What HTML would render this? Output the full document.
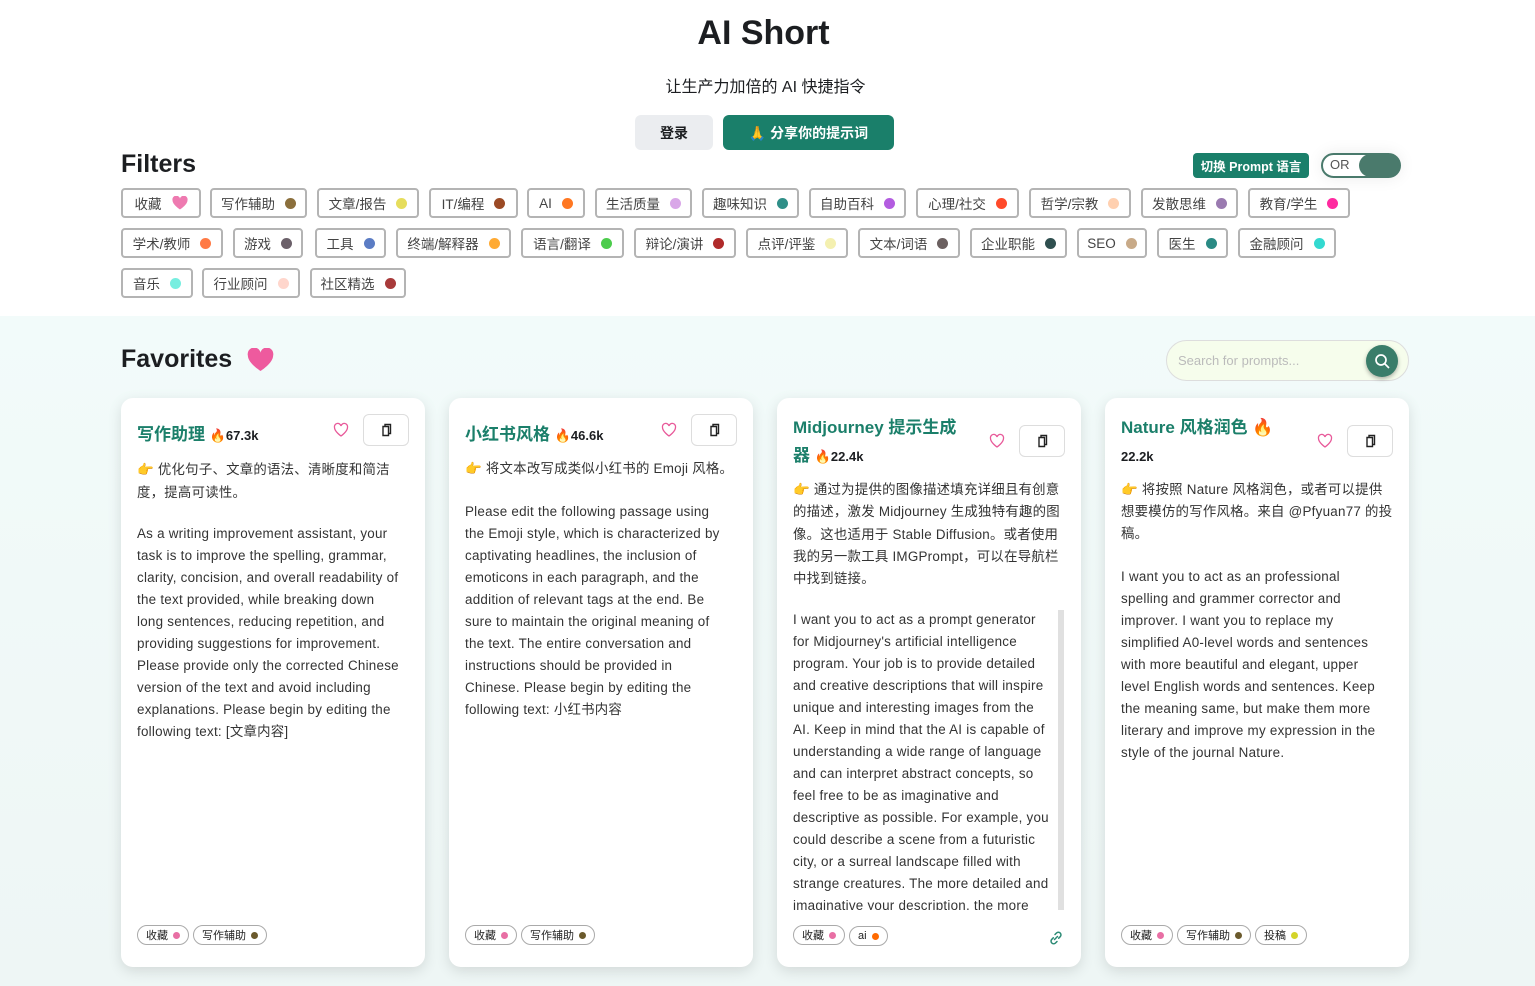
<!DOCTYPE html>
<html><head><meta charset="utf-8"><style>
*{box-sizing:border-box;margin:0;padding:0}
body{width:1535px;height:986px;overflow:hidden;background:#fff;font-family:"Liberation Sans","Noto Sans CJK SC",sans-serif;color:#1c1e21;position:relative}
.abs{position:absolute}
h1{position:absolute;top:14px;left:-4px;width:1535px;text-align:center;font-size:34px;font-weight:bold;color:#1c1e21}
.sub{top:73px;left:-2px;width:1535px;text-align:center;font-size:16px}
.btn{height:35px;border-radius:6px;font-size:14px;font-weight:bold;display:flex;align-items:center;justify-content:center}
.tag{position:absolute;height:30px;border:2px solid #b4b4b4;border-radius:4px;font-size:13.5px;color:#444;display:flex;align-items:center;justify-content:center;gap:10px;white-space:nowrap}
.dot{width:11px;height:11px;border-radius:50%;display:inline-block}
.sec{position:absolute;top:316px;left:0;width:1535px;height:670px;background:linear-gradient(180deg,#f2fbfa,#eef6f5)}
.card{position:absolute;top:398px;width:304px;height:569px;background:#fff;border-radius:12px;box-shadow:0 4px 14px rgba(0,0,0,.12);overflow:hidden}
.ttl{position:absolute;left:16px;font-size:17px;font-weight:bold;color:#1b7f6a;white-space:nowrap}
.cnt{font-size:13px;color:#1c1e21;font-weight:bold}
.heart{position:absolute;width:16px;height:16px}
.copy{position:absolute;width:46px;height:32px;border:1px solid #ddd;border-radius:6px;display:flex;align-items:center;justify-content:center}
.txt{position:absolute;left:16px;font-size:13.4px;line-height:22px;white-space:nowrap;color:#333;letter-spacing:.25px}
.pill{display:inline-flex;align-items:center;gap:5px;height:20px;padding:0 8px;border:1.5px solid #aaa;border-radius:10px;font-size:11px;margin-right:4px;color:#222}
.pill .dot{width:7px;height:7px}
.tags{position:absolute;left:16px;top:527px}
</style></head><body>
<svg width="0" height="0" style="position:absolute"><defs><g id="cp"><path d="M5 4.5h5.5v9H5z" fill="none" stroke="#222" stroke-width="1.4"/><path d="M7 4.5V2.5h5.5v9h-2" fill="none" stroke="#222" stroke-width="1.4"/></g></defs></svg>
<h1>AI Short</h1>
<div class="abs sub">让生产力加倍的 AI 快捷指令</div>
<div class="abs btn" style="left:635px;top:115px;width:78px;background:#ebedf0">登录</div>
<div class="abs btn" style="left:723px;top:115px;width:171px;background:#1a7f6a;color:#fff">🙏 分享你的提示词</div>
<div class="abs" style="left:121px;top:150px;font-size:25px;font-weight:bold">Filters</div>
<div class="abs" style="left:1193px;top:153px;width:116px;height:25px;background:#1a7f6a;border-radius:4px;color:#fff;font-size:12.5px;font-weight:bold;display:flex;align-items:center;justify-content:center">切换 Prompt 语言</div>
<div class="abs" style="left:1321px;top:153px;width:80px;height:25px;border:2px solid #4a7a6c;border-radius:13px;box-shadow:0 0 16px rgba(0,0,0,.08)"><span style="position:absolute;left:7px;top:2px;font-size:13px;color:#555">OR</span><div style="position:absolute;right:-1px;top:-1px;width:41px;height:23px;border-radius:12px;background:#4a7a6c"></div></div>

<div class="tag" style="left:121px;top:188px;width:80px">收藏 <svg width="16" height="14" viewBox="0 0 16 14"><path d="M8 13.5S.5 8.8.5 4.3A3.8 3.8 0 0 1 8 2.6a3.8 3.8 0 0 1 7.5 1.7C15.5 8.8 8 13.5 8 13.5z" fill="#ee7ab0"/></svg></div>
<div class="tag" style="left:210px;top:188px;width:97px">写作辅助 <span class="dot" style="background:#8b6f3c"></span></div>
<div class="tag" style="left:317px;top:188px;width:102px">文章/报告 <span class="dot" style="background:#e6dd5c"></span></div>
<div class="tag" style="left:429px;top:188px;width:89px">IT/编程 <span class="dot" style="background:#9b4a25"></span></div>
<div class="tag" style="left:527px;top:188px;width:58px">AI <span class="dot" style="background:#ff7722"></span></div>
<div class="tag" style="left:595px;top:188px;width:97px">生活质量 <span class="dot" style="background:#d9a7e8"></span></div>
<div class="tag" style="left:702px;top:188px;width:97px">趣味知识 <span class="dot" style="background:#2f8f88"></span></div>
<div class="tag" style="left:809px;top:188px;width:97px">自助百科 <span class="dot" style="background:#b35ce0"></span></div>
<div class="tag" style="left:916px;top:188px;width:103px">心理/社交 <span class="dot" style="background:#ff4a2a"></span></div>
<div class="tag" style="left:1029px;top:188px;width:102px">哲学/宗教 <span class="dot" style="background:#ffd0b0"></span></div>
<div class="tag" style="left:1141px;top:188px;width:97px">发散思维 <span class="dot" style="background:#9a7ab0"></span></div>
<div class="tag" style="left:1248px;top:188px;width:102px">教育/学生 <span class="dot" style="background:#ff2aa0"></span></div>

<div class="tag" style="left:121px;top:228px;width:102px">学术/教师 <span class="dot" style="background:#ff7a45"></span></div>
<div class="tag" style="left:233px;top:228px;width:70px">游戏 <span class="dot" style="background:#6b6069"></span></div>
<div class="tag" style="left:315px;top:228px;width:71px">工具 <span class="dot" style="background:#5b7cc4"></span></div>
<div class="tag" style="left:396px;top:228px;width:115px">终端/解释器 <span class="dot" style="background:#ffaa33"></span></div>
<div class="tag" style="left:521px;top:228px;width:103px">语言/翻译 <span class="dot" style="background:#4ccc4c"></span></div>
<div class="tag" style="left:634px;top:228px;width:102px">辩论/演讲 <span class="dot" style="background:#b02a2a"></span></div>
<div class="tag" style="left:746px;top:228px;width:102px">点评/评鉴 <span class="dot" style="background:#f4f0b0"></span></div>
<div class="tag" style="left:858px;top:228px;width:102px">文本/词语 <span class="dot" style="background:#6b6060"></span></div>
<div class="tag" style="left:970px;top:228px;width:97px">企业职能 <span class="dot" style="background:#2f4f4f"></span></div>
<div class="tag" style="left:1077px;top:228px;width:70px">SEO <span class="dot" style="background:#c8aa88"></span></div>
<div class="tag" style="left:1157px;top:228px;width:71px">医生 <span class="dot" style="background:#2a8a84"></span></div>
<div class="tag" style="left:1238px;top:228px;width:98px">金融顾问 <span class="dot" style="background:#33d9d0"></span></div>

<div class="tag" style="left:121px;top:268px;width:72px">音乐 <span class="dot" style="background:#77eee0"></span></div>
<div class="tag" style="left:202px;top:268px;width:98px">行业顾问 <span class="dot" style="background:#ffd6cc"></span></div>
<div class="tag" style="left:310px;top:268px;width:96px">社区精选 <span class="dot" style="background:#a83a3a"></span></div>

<div class="sec"></div>
<div class="abs" style="left:121px;top:345px;font-size:25px;font-weight:bold">Favorites</div>
<svg class="abs" style="left:247px;top:348px" width="27" height="24" viewBox="0 0 16 14"><path d="M8 13.5S.5 8.8.5 4.3A3.8 3.8 0 0 1 8 2.6a3.8 3.8 0 0 1 7.5 1.7C15.5 8.8 8 13.5 8 13.5z" fill="#ee5a9e"/></svg>
<div class="abs" style="left:1166px;top:340px;width:243px;height:41px;border:1px solid #ddd;border-radius:21px;background:#f6fdec"><span style="position:absolute;left:11px;top:12px;font-size:13px;color:#bbb">Search for prompts...</span><div style="position:absolute;right:10px;top:4px;width:32px;height:32px;border-radius:50%;background:#3a7d6a;box-shadow:0 2px 4px rgba(0,0,0,.3)"><svg width="32" height="32" viewBox="0 0 32 32"><circle cx="15" cy="15" r="5" fill="none" stroke="#fff" stroke-width="1.7"/><path d="M19 19l4 4" stroke="#fff" stroke-width="1.7"/></svg></div></div>

<!-- card 1 -->
<div class="card" style="left:121px">
<div class="ttl" style="top:22px">写作助理 <span class="cnt">🔥67.3k</span></div>
<svg class="heart" style="left:212px;top:24px" viewBox="0 0 16 16"><path d="M8 14S1.5 9.5 1.5 5.5A3.2 3.2 0 0 1 8 4a3.2 3.2 0 0 1 6.5 1.5C14.5 9.5 8 14 8 14z" fill="none" stroke="#e85a9a" stroke-width="1.3"/></svg>
<div class="copy" style="left:242px;top:16px"><svg width="16" height="16" viewBox="0 0 16 16"><use href="#cp"/></svg></div>
<div class="txt" style="top:60px;line-height:23px">👉 优化句子、文章的语法、清晰度和简洁<br>度，提高可读性。</div>
<div class="txt" style="top:125px">As a writing improvement assistant, your<br>task is to improve the spelling, grammar,<br>clarity, concision, and overall readability of<br>the text provided, while breaking down<br>long sentences, reducing repetition, and<br>providing suggestions for improvement.<br>Please provide only the corrected Chinese<br>version of the text and avoid including<br>explanations. Please begin by editing the<br>following text: [文章内容]</div>
<div class="tags"><span class="pill">收藏 <span class="dot" style="background:#e86fa4"></span></span><span class="pill">写作辅助 <span class="dot" style="background:#6b5a2c"></span></span></div>
</div>
<!-- card 2 -->
<div class="card" style="left:449px">
<div class="ttl" style="top:22px">小红书风格 <span class="cnt">🔥46.6k</span></div>
<svg class="heart" style="left:212px;top:24px" viewBox="0 0 16 16"><path d="M8 14S1.5 9.5 1.5 5.5A3.2 3.2 0 0 1 8 4a3.2 3.2 0 0 1 6.5 1.5C14.5 9.5 8 14 8 14z" fill="none" stroke="#e85a9a" stroke-width="1.3"/></svg>
<div class="copy" style="left:242px;top:16px"><svg width="16" height="16" viewBox="0 0 16 16"><use href="#cp"/></svg></div>
<div class="txt" style="top:60px">👉 将文本改写成类似小红书的 Emoji 风格。</div>
<div class="txt" style="top:103px">Please edit the following passage using<br>the Emoji style, which is characterized by<br>captivating headlines, the inclusion of<br>emoticons in each paragraph, and the<br>addition of relevant tags at the end. Be<br>sure to maintain the original meaning of<br>the text. The entire conversation and<br>instructions should be provided in<br>Chinese. Please begin by editing the<br>following text: 小红书内容</div>
<div class="tags"><span class="pill">收藏 <span class="dot" style="background:#e86fa4"></span></span><span class="pill">写作辅助 <span class="dot" style="background:#6b5a2c"></span></span></div>
</div>
<!-- card 3 -->
<div class="card" style="left:777px">
<div class="ttl" style="top:16px;line-height:28px">Midjourney 提示生成<br>器 <span class="cnt">🔥22.4k</span></div>
<svg class="heart" style="left:212px;top:35px" viewBox="0 0 16 16"><path d="M8 14S1.5 9.5 1.5 5.5A3.2 3.2 0 0 1 8 4a3.2 3.2 0 0 1 6.5 1.5C14.5 9.5 8 14 8 14z" fill="none" stroke="#e85a9a" stroke-width="1.3"/></svg>
<div class="copy" style="left:242px;top:27px"><svg width="16" height="16" viewBox="0 0 16 16"><use href="#cp"/></svg></div>
<div class="txt" style="top:81px;line-height:22.3px">👉 通过为提供的图像描述填充详细且有创意<br>的描述，激发 Midjourney 生成独特有趣的图<br>像。这也适用于 Stable Diffusion。或者使用<br>我的另一款工具 IMGPrompt，可以在导航栏<br>中找到链接。</div>
<div style="position:absolute;left:16px;top:210px;width:264px;height:302px;overflow:hidden"><div class="txt" style="left:0;top:1px">I want you to act as a prompt generator<br>for Midjourney's artificial intelligence<br>program. Your job is to provide detailed<br>and creative descriptions that will inspire<br>unique and interesting images from the<br>AI. Keep in mind that the AI is capable of<br>understanding a wide range of language<br>and can interpret abstract concepts, so<br>feel free to be as imaginative and<br>descriptive as possible. For example, you<br>could describe a scene from a futuristic<br>city, or a surreal landscape filled with<br>strange creatures. The more detailed and<br>imaginative your description, the more</div></div>
<div style="position:absolute;left:281px;top:212px;width:6px;height:300px;background:#e0e0e0"></div>
<div class="tags"><span class="pill">收藏 <span class="dot" style="background:#e86fa4"></span></span><span class="pill">ai <span class="dot" style="background:#ff6a00"></span></span></div>
<svg style="position:absolute;left:270px;top:531px" width="18" height="18" viewBox="0 0 18 18"><path d="M7.5 10.5l3-3M8 5.5l1.5-1.5a2.6 2.6 0 0 1 3.7 3.7L11.7 9.2M6.3 8.8L4.8 10.3a2.6 2.6 0 0 0 3.7 3.7L10 12.5" fill="none" stroke="#2a8a74" stroke-width="1.5" stroke-linecap="round"/></svg>
</div>
<!-- card 4 -->
<div class="card" style="left:1105px">
<div class="ttl" style="top:16px;line-height:28px">Nature 风格润色 🔥<br><span class="cnt">22.2k</span></div>
<svg class="heart" style="left:212px;top:35px" viewBox="0 0 16 16"><path d="M8 14S1.5 9.5 1.5 5.5A3.2 3.2 0 0 1 8 4a3.2 3.2 0 0 1 6.5 1.5C14.5 9.5 8 14 8 14z" fill="none" stroke="#e85a9a" stroke-width="1.3"/></svg>
<div class="copy" style="left:242px;top:27px"><svg width="16" height="16" viewBox="0 0 16 16"><use href="#cp"/></svg></div>
<div class="txt" style="top:81px">👉 将按照 Nature 风格润色，或者可以提供<br>想要模仿的写作风格。来自 @Pfyuan77 的投<br>稿。</div>
<div class="txt" style="top:168px">I want you to act as an professional<br>spelling and grammer corrector and<br>improver. I want you to replace my<br>simplified A0-level words and sentences<br>with more beautiful and elegant, upper<br>level English words and sentences. Keep<br>the meaning same, but make them more<br>literary and improve my expression in the<br>style of the journal Nature.</div>
<div class="tags"><span class="pill">收藏 <span class="dot" style="background:#e86fa4"></span></span><span class="pill">写作辅助 <span class="dot" style="background:#6b5a2c"></span></span><span class="pill">投稿 <span class="dot" style="background:#d4d42a"></span></span></div>
</div>
</body></html>
